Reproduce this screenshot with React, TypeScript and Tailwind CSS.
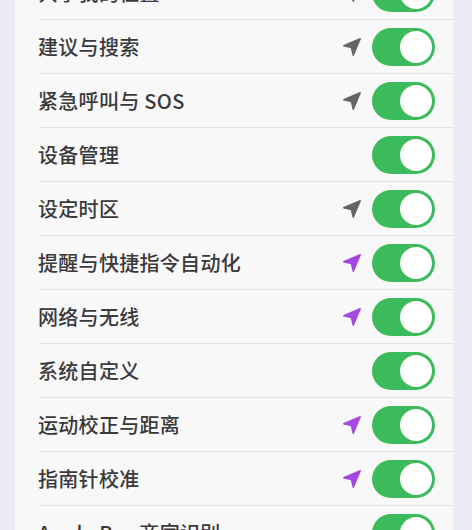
const rows: { label: string; arrow?: 'gray' | 'purple' }[] = [
    { label: '共享我的位置', arrow: 'gray' },
    { label: '建议与搜索', arrow: 'gray' },
    { label: '紧急呼叫与 SOS', arrow: 'gray' },
    { label: '设备管理' },
    { label: '设定时区', arrow: 'gray' },
    { label: '提醒与快捷指令自动化', arrow: 'purple' },
    { label: '网络与无线', arrow: 'purple' },
    { label: '系统自定义' },
    { label: '运动校正与距离', arrow: 'purple' },
    { label: '指南针校准', arrow: 'purple' },
    { label: 'Apple Pay 商家识别' },
];

function LocationArrow({ color }: { color: string }) {
    return (
        <svg width="22" height="22" viewBox="0 0 24 24" className="shrink-0">
            <path d="M21 3 L3 10.6 L11.3 12.7 L13.4 21 Z" fill={color} strokeLinejoin="round" stroke={color} strokeWidth="1.6" />
        </svg>
    );
}

function Toggle() {
    return (
        <div className="w-[63px] h-[38px] rounded-full bg-[#3bbb5a] p-[3px] flex justify-end shrink-0">
            <div className="w-[32px] h-[32px] rounded-full bg-white" />
        </div>
    );
}

export default function App() {
    return (
        <div className="w-[472px] h-[530px] overflow-hidden bg-[#ecebf3] flex font-['Noto_Sans_CJK_SC','Noto_Sans',sans-serif]">
            <div className="ml-[15px] w-[438px] bg-[#f8f8f9] -mt-[34px] h-fit">
                {rows.map((row, i) => (
                    <div key={i}>
                        <div className="h-[53px] flex items-center pl-[23px] pr-[18px]">
                            <span className="flex-1 text-[20px] font-medium text-[#3a3a3c] tracking-[0.3px]">{row.label}</span>
                            {row.arrow && (
                                <div className="mr-[9px]">
                                    <LocationArrow color={row.arrow === 'purple' ? '#a448e0' : '#646469'} />
                                </div>
                            )}
                            <Toggle />
                        </div>
                        <div className="ml-[25px] h-px bg-[#e3e3e6]" />
                    </div>
                ))}
            </div>
        </div>
    );
}
